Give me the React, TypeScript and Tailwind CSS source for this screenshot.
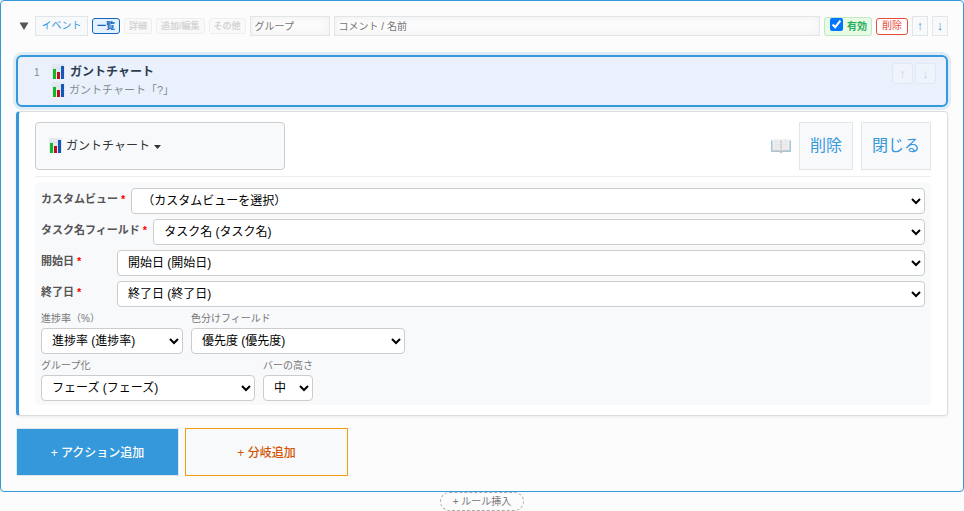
import type { ReactNode } from "react";
import clsx from "clsx";

const TABS = [
  { label: "一覧", active: true },
  { label: "詳細", active: false },
  { label: "追加/編集", active: false },
  { label: "その他", active: false },
];

const REQUIRED_FIELDS = [
  { id: "view", label: "カスタムビュー", value: "（カスタムビューを選択）" },
  { id: "task", label: "タスク名フィールド", value: "タスク名 (タスク名)" },
  { id: "start", label: "開始日", value: "開始日 (開始日)" },
  { id: "end", label: "終了日", value: "終了日 (終了日)" },
];

export default function App() {
  return (
    <div className="bg-[#fcfcfc] font-['Liberation_Sans','Noto_Sans_CJK_JP',sans-serif] text-xs text-[#2c3e50]">
      <section className="rounded border border-[#3498db] p-[15px]">
        <RuleHeader />

        {/* Selected action */}
        <div className="mt-[19px] flex h-[52px] rounded-md border-2 border-[#3498db] bg-[#eaf1fd] pt-1.5 pr-2.5 pl-4 shadow-[0_0_0_3px_#deecf8]">
          <span className="w-[18px] pt-0.5 text-[10px] leading-4 text-[#7f8c8d]">1</span>
          <div className="flex-1">
            <div className="flex h-[18px] items-center gap-[5px] font-bold">
              <ChartIcon />
              ガントチャート
            </div>
            <div className="flex h-[18px] items-center gap-1 text-[11px] text-[#7f8c8d]">
              <ChartIcon />
              ガントチャート「?」
            </div>
          </div>
          <div className="flex gap-0.5">
            <MoveBtn faded label="上へ移動">↑</MoveBtn>
            <MoveBtn faded label="下へ移動">↓</MoveBtn>
          </div>
        </div>

        <ActionPanel />

        <div className="mt-3 flex gap-1.5">
          <button className="h-12 w-[163px] border border-[#dfe6e9] bg-[#3498db] pt-0.5 font-medium text-white">
            + アクション追加
          </button>
          <button className="h-12 w-[163px] border border-[#f39c12] bg-[#f8f9fb] pt-0.5 font-medium text-[#d35400]">
            + 分岐追加
          </button>
        </div>
      </section>

      <div className="flex justify-center">
        <button className="h-[19px] w-[84px] rounded-full border border-dashed border-[#aaa] text-[10px] leading-4 text-[#777]">
          + ルール挿入
        </button>
      </div>
    </div>
  );
}

function RuleHeader() {
  return (
    <div className="flex h-5 items-center gap-1 pl-[3px]">
      <button aria-label="折りたたむ" className="mr-0.5 flex w-2.5 justify-center">
        <svg className="h-2 w-2.5 shrink-0" viewBox="0 0 10 8">
          <path d="M0.5 0.5h9L5 8z" fill="#555" />
        </svg>
      </button>
      <button className="h-5 w-[53px] border border-[#e1e6e8] bg-[#f8f9fb] text-[10px] text-[#3498db]">
        イベント
      </button>
      {TABS.map((tab) => (
        <button
          key={tab.label}
          className={clsx(
            "h-4 shrink-0 rounded-[3px] border px-1 text-[9px] leading-3 font-bold",
            tab.active
              ? "border-[#1565c0] bg-[#e3f2fd] text-[#1565c0]"
              : "border-[#eee] bg-[#f9f9f9] text-[#d5d5d5]"
          )}
        >
          {tab.label}
        </button>
      ))}
      <input
        aria-label="グループ"
        placeholder="グループ"
        className="h-5 w-20 border border-[#e1e6e8] bg-[#fcfcfc] px-1 text-[10px] shadow-[inset_0_0_8px_#eee] placeholder:text-[#757575]"
      />
      <input
        aria-label="コメント / 名前"
        placeholder="コメント / 名前"
        className="h-5 min-w-0 flex-1 border border-[#e1e6e8] bg-[#fcfcfc] px-1 text-[10px] shadow-[inset_0_0_8px_#eee] placeholder:text-[#757575]"
      />
      <label className="flex h-[19px] w-12 items-center gap-1 rounded-[3px] border border-[#c3e6c3] bg-[#e8fbe4] pl-[5px] text-[10px] font-bold text-[#27ae60]">
        <input type="checkbox" defaultChecked className="mb-1 size-[13px] accent-[#0075ff]" />
        <span className="pt-0.5">有効</span>
      </label>
      <button className="h-[17px] w-8 rounded-[3px] border border-[#e74c3c] bg-white text-[10px] leading-[14px] text-[#e74c3c]">
        削除
      </button>
      <MoveBtn label="ルールを上へ">↑</MoveBtn>
      <MoveBtn label="ルールを下へ">↓</MoveBtn>
    </div>
  );
}

function ActionPanel() {
  return (
    <div className="mt-1 rounded border border-l-3 border-[#ddd] border-l-[#3498db] bg-white px-4 py-2.5 shadow-[0_1px_3px_rgba(0,0,0,0.08)]">
      <div className="flex items-center border-b border-[#eee] pb-1.5">
        <button className="flex h-12 w-[250px] items-center gap-1 rounded border border-[#ccc] bg-[#f8f9fb] px-[13px] text-[#333]">
          <ChartIcon />
          ガントチャート
          <svg className="mt-0.5 h-1 w-[7px]" viewBox="0 0 7 4">
            <path d="M0 0h7L3.5 4z" fill="#333" />
          </svg>
        </button>
        <button aria-label="ヘルプ" className="mr-2 ml-auto">
          <BookIcon />
        </button>
        <button className="mr-2 h-12 w-[54px] border border-[#e1e6e8] bg-[#f8f9fb] text-base text-[#3498db]">
          削除
        </button>
        <button className="h-12 w-[70px] border border-[#e1e6e8] bg-[#f8f9fb] text-base text-[#3498db]">
          閉じる
        </button>
      </div>

      <div className="mt-1.5 rounded bg-[#f8f9fb] px-1.5 pt-[5px] pb-1">
        <div className="flex flex-col gap-[5px]">
          {REQUIRED_FIELDS.map((f) => (
            <div key={f.id} className="flex items-center gap-1.5">
              <label htmlFor={f.id} className="min-w-[70px] shrink-0 pb-1 text-[11px] leading-4 font-bold text-[#555]">
                {f.label} <span className="text-[red]">*</span>
              </label>
              <Select id={f.id} value={f.value} className="min-w-0 flex-1" />
            </div>
          ))}
        </div>
        <div className="mt-1 flex gap-2">
          <SmallField id="progress" label="進捗率（%）" value="進捗率 (進捗率)" width="w-[142px]" />
          <SmallField id="color" label="色分けフィールド" value="優先度 (優先度)" width="w-[214px]" />
        </div>
        <div className="mt-1 flex gap-2">
          <SmallField id="group" label="グループ化" value="フェーズ (フェーズ)" width="w-[214px]" />
          <SmallField id="height" label="バーの高さ" value="中" width="w-[50px]" />
        </div>
      </div>
    </div>
  );
}

function Select({ id, value, className }: { id: string; value: string; className: string }) {
  return (
    <select
      id={id}
      className={clsx("h-[26px] rounded border border-[#ccc] bg-white pl-1.5 text-xs text-black", className)}
    >
      <option>{value}</option>
    </select>
  );
}

function SmallField({ id, label, value, width }: { id: string; label: string; value: string; width: string }) {
  return (
    <div className="flex flex-col gap-0.5">
      <label htmlFor={id} className="text-[10px] leading-[15px] text-[#777]">
        {label}
      </label>
      <Select id={id} value={value} className={width} />
    </div>
  );
}

function MoveBtn({ faded, label, children }: { faded?: boolean; label: string; children: ReactNode }) {
  return (
    <button
      aria-label={label}
      className={clsx(
        "shrink-0 border text-[13px] leading-4",
        faded
          ? "h-[21px] w-[21px] rounded-[3px] border-[#e1e7f3] bg-[#eef3fc] text-[#ccd3de]"
          : "h-5 w-4 border-[#e1e6e8] bg-[#f8f9fb] text-[#3498db]"
      )}
    >
      {children}
    </button>
  );
}

function ChartIcon() {
  return (
    <svg className="mb-px h-[15px] w-[13px] shrink-0" viewBox="0 0 13 15">
      <path d="M0 0h13v15H0z" fill="#e3e9f0" />
      <path d="M0 4.5h13M0 9h13" stroke="#d0d9e3" strokeWidth="0.6" />
      <path d="M1 5h3v10H1z" fill="#12b825" />
      <path d="M5 8h3v7H5z" fill="#c01020" />
      <path d="M9 2h3v13H9z" fill="#1557b8" />
    </svg>
  );
}

function BookIcon() {
  return (
    <svg className="h-4 w-5" viewBox="0 0 20 16">
      <path d="M0 2.500h20v11.500h-8.500L10 15.500 8.500 14H0z" fill="#a3c7d8" />
      <path d="M1.500 1.500C5 .5 8 .7 10 2c2-1.300 5-1.500 8.500-.5v11.500H1.500z" fill="#efefef" />
      <path d="M1.500 12.500q5-1 8.500.8 3.500-1.800 8.500-.8" fill="none" stroke="#c9c4c4" strokeWidth="1" />
      <path d="M10 2v12" stroke="#b5b5b5" strokeWidth="0.9" />
      <path d="M3.500 4q3-.5 5 .3M3.500 6.500q3-.5 5 .3M3.500 9q3-.5 5 .3M16.500 4q-3-.5-5 .3M16.500 6.500q-3-.5-5 .3M16.500 9q-3-.5-5 .3" fill="none" stroke="#dadada" strokeWidth="0.6" />
    </svg>
  );
}
